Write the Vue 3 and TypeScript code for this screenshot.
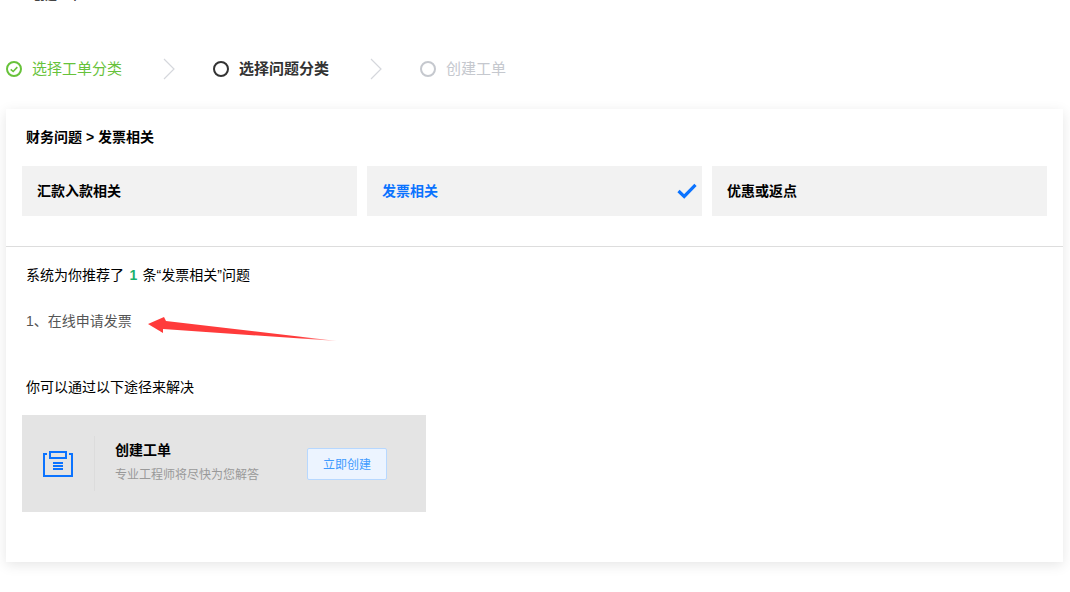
<script setup lang="ts">
const tabs: { label: string; active?: boolean }[] = [
  { label: '汇款入款相关' },
  { label: '发票相关', active: true },
  { label: '优惠或返点' },
]
</script>

<template>
  <div class="page">
    <div class="page-title">创建工单<span class="mark">*</span></div>

    <div class="steps">
      <div class="step done">
        <svg class="step-icon" width="16" height="16" viewBox="0 0 16 16">
          <circle cx="8" cy="8" r="7" fill="none" stroke="#67c23a" stroke-width="2" />
          <path d="M4.7 8.3 7.2 10.5 11.3 6.1" fill="none" stroke="#67c23a" stroke-width="1.6" />
        </svg>
        <span>选择工单分类</span>
      </div>
      <svg class="chev" width="12" height="22" viewBox="0 0 12 22"><path d="M1 1 11 11 1 21" fill="none" stroke="#d5d7dc" stroke-width="1.2" /></svg>
      <div class="step current">
        <svg class="step-icon" width="16" height="16" viewBox="0 0 16 16"><circle cx="8" cy="8" r="7" fill="none" stroke="#333" stroke-width="2" /></svg>
        <span>选择问题分类</span>
      </div>
      <svg class="chev" width="12" height="22" viewBox="0 0 12 22"><path d="M1 1 11 11 1 21" fill="none" stroke="#d5d7dc" stroke-width="1.2" /></svg>
      <div class="step todo">
        <svg class="step-icon" width="16" height="16" viewBox="0 0 16 16"><circle cx="8" cy="8" r="7" fill="none" stroke="#c5c8ce" stroke-width="2" /></svg>
        <span>创建工单</span>
      </div>
    </div>

    <section class="card">
      <div class="crumb">财务问题 &gt; 发票相关</div>
      <div class="tabs">
        <div v-for="t in tabs" :key="t.label" class="tab" :class="{ active: t.active }">
          <span class="tab-label">{{ t.label }}</span>
          <svg v-if="t.active" class="tick" width="20" height="16" viewBox="0 0 20 16">
            <path d="M1.5 8 7.2 13.4 18.5 1.8" fill="none" stroke="#0b73ff" stroke-width="3.2" />
          </svg>
        </div>
      </div>
      <div class="rule"></div>
      <p class="recommend">系统为你推荐了 <b class="count">1</b> 条“发票相关”问题</p>
      <p class="item">1、在线申请发票</p>
      <p class="ways">你可以通过以下途径来解决</p>
      <div class="banner">
        <div class="banner-icon">
          <svg width="32" height="28" viewBox="0 0 32 28">
            <g fill="none" stroke="#0b73ff" stroke-width="2">
              <rect x="8" y="2" width="16" height="6" />
              <path d="M5 4H2V26H30V20" />
              <path d="M27 4H30V21" />
            </g>
            <g fill="#0b73ff">
              <rect x="11" y="12" width="10" height="2" />
              <rect x="11" y="15" width="10" height="2" />
              <rect x="11" y="18" width="10" height="2" />
            </g>
          </svg>
        </div>
        <div class="banner-text">
          <div class="banner-title">创建工单</div>
          <div class="banner-sub">专业工程师将尽快为您解答</div>
        </div>
        <button class="create" type="button">立即创建</button>
      </div>
    </section>

    <svg class="arrow" width="200" height="40" viewBox="140 310 200 40">
      <defs>
        <linearGradient id="fade" x1="0" y1="0" x2="1" y2="0">
          <stop offset="0" stop-color="#ff3b3b" />
          <stop offset="0.8" stop-color="#ff3b3b" />
          <stop offset="1" stop-color="#ff3b3b" stop-opacity="0.35" />
        </linearGradient>
      </defs>
      <path d="M148 324 164 317 166 321 337 341 163 329 163 333Z" fill="url(#fade)" />
    </svg>
  </div>
</template>

<style>
html, body { margin: 0; background: #fff; overflow: hidden; }
</style>

<style scoped>
.page {
  position: relative;
  height: 592px;
  overflow: hidden;
  font-family: "Liberation Sans", "Noto Sans CJK SC", sans-serif;
  color: #000;
}
.page-title {
  height: 2px;
  margin-left: 33px;
  font-size: 12px;
  font-weight: 700;
  line-height: 0;
  color: #444;
  transform: translateY(-4px);
}
.mark { color: #f08a24; margin-left: 3px; }
.steps {
  display: flex;
  align-items: center;
  height: 22px;
  margin: 56px 0 0 6px;
}
.step {
  display: flex;
  align-items: center;
  gap: 10px;
  font-size: 15px;
}
.step span { line-height: 18px; }
.step-icon { flex: none; }
.done { color: #67c23a; }
.current { color: #333; font-weight: 700; }
.todo { color: #c5c8ce; }
.chev { margin: 0 38px 0 41px; flex: none; }
.card {
  width: 1057px;
  height: 453px;
  margin: 29px 0 0 6px;
  background: #fff;
  box-shadow: 0 3px 12px rgba(0, 0, 0, 0.1);
  overflow: hidden;
}
.crumb {
  margin: 20px 0 0 20px;
  font-size: 14px;
  line-height: 16px;
  font-weight: 700;
}
.tabs {
  display: flex;
  gap: 10px;
  margin: 21px 16px 0;
}
.tab {
  flex: 1;
  height: 50px;
  display: flex;
  align-items: center;
  justify-content: space-between;
  padding: 0 5px 0 15px;
  background: #f2f2f2;
  font-size: 14px;
  font-weight: 700;
}
.tab-label { margin-bottom: 2px; }
.tab.active { color: #0b73ff; }
.rule {
  height: 1px;
  margin-top: 30px;
  background: #ddd;
}
.recommend, .item, .ways {
  margin: 0 0 0 20px;
  font-size: 14px;
  line-height: 20px;
}
.recommend { margin-top: 18px; }
.count { color: #1ab06e; margin: 0 1.5px; }
.item { margin-top: 26px; color: #555; }
.ways { margin-top: 46px; }
.banner {
  display: flex;
  align-items: center;
  width: 404px;
  height: 97px;
  margin: 18px 0 0 16px;
  background: #e4e4e4;
}
.banner-icon {
  display: flex;
  align-items: center;
  width: 73px;
  height: 55px;
  padding-left: 20px;
  box-sizing: border-box;
  border-right: 1px solid #dcdcdc;
  flex: none;
}
.banner-text { margin-left: 20px; width: 192px; margin-bottom: 3px; }
.banner-title { font-size: 14px; font-weight: 700; line-height: 20px; }
.banner-sub { margin-top: 6px; font-size: 12px; line-height: 18px; color: #999; }
.create {
  width: 80px;
  height: 32px;
  padding: 0;
  border: 1px solid #b7d8ff;
  border-radius: 2px;
  background: #ecf4ff;
  color: #3f9bff;
  font: 12px "Liberation Sans", "Noto Sans CJK SC", sans-serif;
}
.arrow {
  position: absolute;
  left: 140px;
  top: 310px;
}
</style>
